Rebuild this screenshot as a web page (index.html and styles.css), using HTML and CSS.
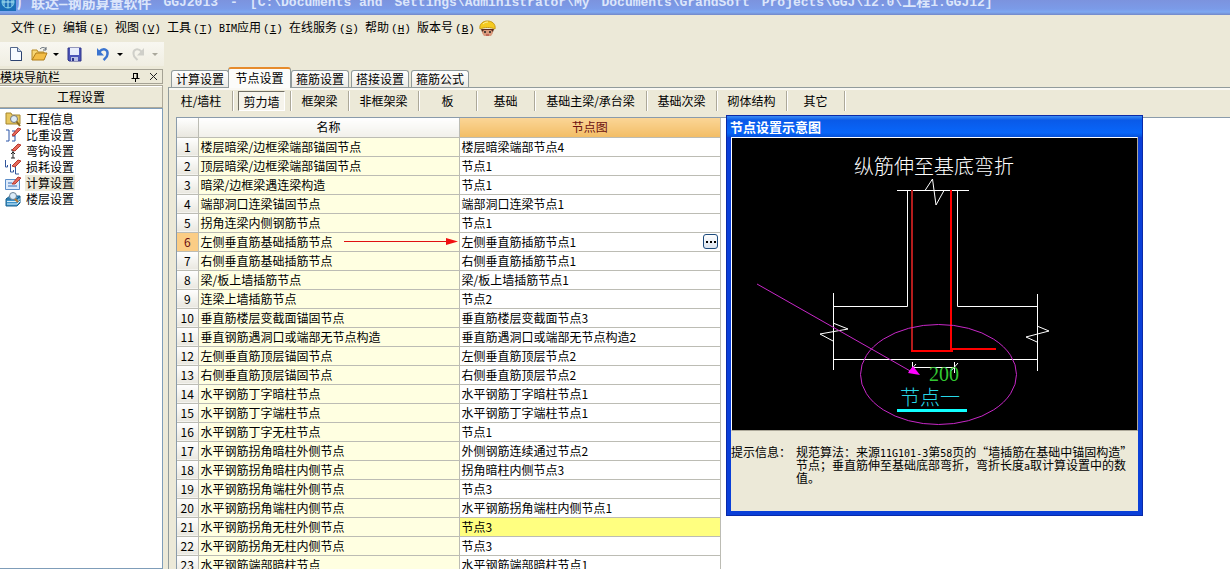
FILE: index.html
```html
<!DOCTYPE html>
<html lang="zh-CN">
<head>
<meta charset="utf-8">
<title>广联达—钢筋算量软件 GGJ2013</title>
<link rel="stylesheet" href="styles.css">
</head>
<body>
<header class="titlebar">
  <svg class="app-logo" width="16" height="16" viewBox="0 0 16 16"><rect width="16" height="16" fill="#1c6fb8"/><circle cx="8" cy="7" r="6" fill="none" stroke="#7fd4e8"/><path d="M2 7h12M8 1v12M4 3v8M12 3v8" stroke="#a9e4f2" fill="none"/></svg>
  <span class="title-cjk">广联达—钢筋算量软件</span>
  <span>GGJ2013</span>
  <span>-</span>
  <span>[C:\Documents and</span>
  <span>Settings\Administrator\My</span>
  <span>Documents\GrandSoft</span>
  <span>Projects\GGJ\12.0\<span class="title-cjk">工程</span>1.GGJ12]</span>
</header>

<nav class="menubar">
  <button>文件<span class="key">(<u>F</u>)</span></button>
  <button>编辑<span class="key">(<u>E</u>)</span></button>
  <button>视图<span class="key">(<u>V</u>)</span></button>
  <button>工具<span class="key">(<u>T</u>)</span></button>
  <button class="menu-bim"><span class="latin">BIM</span>应用<span class="key">(<u>I</u>)</span></button>
  <button class="menu-online">在线服务<span class="key">(<u>S</u>)</span></button>
  <button>帮助<span class="key">(<u>H</u>)</span></button>
  <button class="menu-version">版本号<span class="key">(<u>B</u>)</span></button>
  <svg width="17" height="17" viewBox="0 0 17 17"><path d="M3 9h11v4l-2 3H5l-2-3z" fill="#d99a7c"/><path d="M2 9h13l-1 3-2-2H5l-2 2z" fill="#5b2a1c"/><path d="M1 9C0 4 4 1 8.500 1S17 4 16 9c-4-2-11-2-15 0z" fill="#f5cb20" stroke="#c99a12"/><path d="M4 4c2-2 4-2 5-2" stroke="#fff3a0" fill="none"/><path d="M6 11v2M11 11v2" stroke="#222" stroke-width="1.500"/><path d="M7 15h3" stroke="#a33"/></svg>
</nav>

<div class="toolbar">
  <button class="tool" aria-label="新建"><svg width="14" height="16" viewBox="0 0 14 16"><path d="M1.500 1.500h7l4 4v9h-11z" fill="#f7fbff" stroke="#53678c"/><path d="M8.500 1.500v4h4" fill="#c7d8ef" stroke="#53678c"/><path d="M12.500 6v8.500H2" fill="none" stroke="#2c4270"/></svg></button>
  <button class="tool tool-open" aria-label="打开"><svg width="18" height="16" viewBox="0 0 18 16"><path d="M1 14V4h5l1 2h6v2" fill="#f7d775" stroke="#b78a25"/><path d="M1 14l4-7h11l-3 7z" fill="#f3bd45" stroke="#b07c18"/><path d="M9 3c2-2 4-2 6 0m0-2v3h-3" fill="none" stroke="#5a6470"/></svg></button>
  <i class="caret"></i>
  <button class="tool" aria-label="保存"><svg width="15" height="15" viewBox="0 0 15 15"><path d="M1 1h13v13H2L1 13z" fill="#4c55b8" stroke="#30368a"/><path d="M3 1h9v7H3z" fill="#e8edfb"/><path d="M4 10h7v4H4z" fill="#b9c0e4"/><path d="M5 11h2v3H5z" fill="#30368a"/></svg></button>
  <i class="tool-sep"></i>
  <button class="tool" aria-label="撤销"><svg width="14" height="14" viewBox="0 0 14 14"><path d="M3 5C8 0 12 3 11.500 7c0 3-2 4-4 6" fill="none" stroke="#3b74d0" stroke-width="2.500"/><path d="M1 1v7.500h7z" fill="#3b74d0"/></svg></button>
  <i class="caret"></i>
  <button class="tool" aria-label="重做" disabled><svg width="14" height="14" viewBox="0 0 14 14"><path d="M11 5C6 0 2 3 2.500 7c0 3 2 4 4 6" fill="none" stroke="#cfcfc9" stroke-width="2"/><path d="M13 1v7.500H6z" fill="#cfcfc9"/></svg></button>
  <i class="caret caret-off"></i>
</div>

<div class="workspace">
  <aside class="sidebar">
    <div class="side-head"><span class="side-title">模块导航栏</span>
      <button aria-label="固定"><svg width="9" height="10" viewBox="0 0 9 10"><path d="M2.500 1v5M2 1.500h5M.500 6.500h8M4.500 6v4" stroke="#000" fill="none"/><path d="M5.500 1h1.500v5H5.500z"/></svg></button>
      <button aria-label="关闭"><svg width="9" height="9" viewBox="0 0 9 9"><path d="M1 1l7 7M8 1L1 8" stroke="#222"/></svg></button>
    </div>
    <button class="side-section">工程设置</button>
    <ul class="side-list">
      <li><svg width="16" height="16" viewBox="0 0 16 16"><path d="M1 2h5l1 2h8v9H1z" fill="#e8c860" stroke="#a5862c"/><circle cx="9" cy="8" r="3.500" fill="#dcebf7" stroke="#777"/><path d="M11.500 10.500L15 15" stroke="#8a6a20" stroke-width="2"/></svg><a href="#">工程信息</a></li>
      <li><svg width="16" height="16" viewBox="0 0 16 16"><path d="M1 3h3v11H1M7 4h3v10H7M7 9h3" stroke="#2b55a8" fill="none"/><path d="M7 8l6-7 3 1-7 7z" fill="#e66a5c" stroke="#b8382e"/></svg><a href="#">比重设置</a></li>
      <li><svg width="16" height="16" viewBox="0 0 16 16"><path d="M6 15h4M8 15V7M6 11l2-2 2 2M8 7H6" stroke="#222" fill="none"/><path d="M7 7l6-6 3 1-6 6z" fill="#e66a5c" stroke="#b8382e"/></svg><a href="#">弯钩设置</a></li>
      <li><svg width="16" height="16" viewBox="0 0 16 16"><path d="M.500 1v7h2V6M5.500 5v8h3v-2M10.500 8v7H14" stroke="#33569c" fill="none"/><path d="M7 7l6-6 3 1-6 6z" fill="#e66a5c" stroke="#b8382e"/></svg><a href="#">损耗设置</a></li>
      <li class="current"><svg width="16" height="16" viewBox="0 0 16 16"><path d="M.500 4.500h14v10H.500z" fill="#dceafb" stroke="#5b8dc9"/><path d="M3 8h4M3 11h9" stroke="#3c6fb2"/><path d="M7 9l6-7 3 1-6 6z" fill="#e66a5c" stroke="#b8382e"/></svg><a href="#">计算设置</a></li>
      <li><svg width="16" height="16" viewBox="0 0 16 16"><path d="M1 8l4-3h10l-3 3zM1 8v7h11l3-3V5l-3 3" fill="#3f93c9" stroke="#19608f"/><path d="M2 10.500h10l3-3M2 13h10l3-3" stroke="#d9f0fb" fill="none"/><circle cx="8" cy="5" r="3.500" fill="#dcecf8" stroke="#6b8296"/><path d="M10 8l3 3" stroke="#b97b35" stroke-width="2"/></svg><a href="#">楼层设置</a></li>
    </ul>
  </aside>

  <main class="content">
    <div class="tabs">
      <button>计算设置</button><button class="active">节点设置</button><button>箍筋设置</button><button>搭接设置</button><button>箍筋公式</button>
    </div>
    <section class="panel">
      <div class="subtabs">
        <button>柱/墙柱</button><button class="pressed"><span>剪力墙</span></button><button>框架梁</button><button class="mid">非框架梁</button><button>板</button><button>基础</button><button class="wide">基础主梁/承台梁</button><button class="mid">基础次梁</button><button class="mid">砌体结构</button><button>其它</button>
      </div>
      <div class="grid-area">
        <table class="grid">
          <thead><tr><th class="num"></th><th class="name">名称</th><th class="node">节点图</th></tr></thead>
          <tbody>
            <tr><th>1</th><td>楼层暗梁/边框梁端部锚固节点</td><td>楼层暗梁端部节点4</td></tr>
            <tr><th>2</th><td>顶层暗梁/边框梁端部锚固节点</td><td>节点1</td></tr>
            <tr><th>3</th><td>暗梁/边框梁遇连梁构造</td><td>节点1</td></tr>
            <tr><th>4</th><td>端部洞口连梁锚固节点</td><td>端部洞口连梁节点1</td></tr>
            <tr><th>5</th><td>拐角连梁内侧钢筋节点</td><td>节点1</td></tr>
            <tr class="selected"><th>6</th><td><div class="cell">左侧垂直筋基础插筋节点<svg width="114" height="10" viewBox="0 0 114 10"><path d="M0 4.500h104" stroke="#e01010"/><path d="M102 1l12 3.500L102 8z" fill="#f01010"/></svg></div></td><td><div class="cell cell-edit">左侧垂直筋插筋节点1<button class="more" aria-label="更多"><i></i><i></i><i></i></button></div></td></tr>
            <tr><th>7</th><td>右侧垂直筋基础插筋节点</td><td>右侧垂直筋插筋节点1</td></tr>
            <tr><th>8</th><td>梁/板上墙插筋节点</td><td>梁/板上墙插筋节点1</td></tr>
            <tr><th>9</th><td>连梁上墙插筋节点</td><td>节点2</td></tr>
            <tr><th>10</th><td>垂直筋楼层变截面锚固节点</td><td>垂直筋楼层变截面节点3</td></tr>
            <tr><th>11</th><td>垂直钢筋遇洞口或端部无节点构造</td><td>垂直筋遇洞口或端部无节点构造2</td></tr>
            <tr><th>12</th><td>左侧垂直筋顶层锚固节点</td><td>左侧垂直筋顶层节点2</td></tr>
            <tr><th>13</th><td>右侧垂直筋顶层锚固节点</td><td>右侧垂直筋顶层节点2</td></tr>
            <tr><th>14</th><td>水平钢筋丁字暗柱节点</td><td>水平钢筋丁字暗柱节点1</td></tr>
            <tr><th>15</th><td>水平钢筋丁字端柱节点</td><td>水平钢筋丁字端柱节点1</td></tr>
            <tr><th>16</th><td>水平钢筋丁字无柱节点</td><td>节点1</td></tr>
            <tr><th>17</th><td>水平钢筋拐角暗柱外侧节点</td><td>外侧钢筋连续通过节点2</td></tr>
            <tr><th>18</th><td>水平钢筋拐角暗柱内侧节点</td><td>拐角暗柱内侧节点3</td></tr>
            <tr><th>19</th><td>水平钢筋拐角端柱外侧节点</td><td>节点3</td></tr>
            <tr><th>20</th><td>水平钢筋拐角端柱内侧节点</td><td>水平钢筋拐角端柱内侧节点1</td></tr>
            <tr class="changed"><th>21</th><td>水平钢筋拐角无柱外侧节点</td><td>节点3</td></tr>
            <tr><th>22</th><td>水平钢筋拐角无柱内侧节点</td><td>节点3</td></tr>
            <tr><th>23</th><td>水平钢筋端部暗柱节点</td><td>水平钢筋端部暗柱节点1</td></tr>
          </tbody>
        </table>
      </div>
    </section>
  </main>
</div>

<section class="dialog">
  <h2>节点设置示意图</h2>
  <div class="dialog-body">
    <svg class="drawing" viewBox="732 138 405 292">
      <g fill="none" stroke="#fff">
        <path d="M897 190.500H925L932.500 179L936 205L944 190.500H969M925 190.500H944"/>
        <path d="M907.500 190V306.500H833M957.500 190V306.500H1038M833 359.500H1038"/>
        <path d="M833.500 293V370M1037.500 294V371"/>
        <path d="M833 323L848 329L820 334L833 341M1037 326L1049 331L1026 337L1037 342"/>
        <path d="M912.500 362V371M954.500 362V373M912 367.500H955M909 372L916 364M951 371L958 363"/>
      </g>
      <path d="M912 190V351" stroke="#b41c1c" stroke-width="2" fill="none"/>
      <path d="M951 190V351M911 351H953M951 349H996" stroke="#f00" stroke-width="2" fill="none"/>
      <text class="draw-title" x="854" y="174">纵筋伸至基底弯折</text>
      <text class="draw-size" x="929" y="381">200</text>
      <text class="draw-node" x="900" y="405">节点一</text>
      <path d="M897 410.500H967" stroke="#1ff" stroke-width="3"/>
      <g fill="none" stroke="#c828c8"><ellipse cx="938.500" cy="374.500" rx="78" ry="50"/><path d="M757 284L912 372"/></g>
      <path d="M920 375L908 373L913 366z" fill="#f0f"/>
    </svg>
    <div class="note"><span>提示信息：</span><p>规范算法：来源<span class="latin">11G101-3</span>第<span class="latin">58</span>页的“墙插筋在基础中锚固构造”<br>节点；垂直筋伸至基础底部弯折，弯折长度<span class="latin">a</span>取计算设置中的数<br>值。</p></div>
  </div>
</section>
</body>
</html>
```
FILE: styles.css
```css
* { box-sizing: border-box; }
body {
  margin: 0;
  height: 100vh;
  overflow: hidden;
  display: flex;
  flex-direction: column;
  position: relative;
  background: #ece9d8;
  color: #000;
  font: 12px/16px "Noto Sans CJK SC", sans-serif;
}
button {
  margin: 0;
  padding: 0;
  border: 0;
  background: none;
  color: inherit;
  font: inherit;
  white-space: nowrap;
}
svg { flex: none; }
.latin { font-family: "DejaVu Sans Mono", monospace; font-size: 10px; line-height: 1; }

.titlebar {
  flex: none;
  height: 15px;
  display: flex;
  align-items: flex-end;
  gap: 12px;
  padding-bottom: 4px;
  overflow: hidden;
  background: linear-gradient(#7c93de, #7b9be8 60%, #7fa9f2 80%, #7388c8);
  color: #dce6fb;
  font: bold 13px/16px "Liberation Mono", "Noto Sans CJK SC", monospace;
  white-space: nowrap;
}
.app-logo { margin-right: -11px; }
.title-cjk { font-size: 14px; line-height: 1; }

.menubar {
  flex: none;
  height: 26px;
  display: flex;
  align-items: center;
  padding-left: 11px;
}
.menubar button { width: 52px; text-align: left; }
.menubar .menu-bim { width: 70px; }
.menubar .menu-online { width: 76px; }
.menubar .menu-version { width: 62px; }
.key { margin-left: 2px; font: 11px/16px "Liberation Mono", monospace; }

.toolbar {
  flex: none;
  align-self: flex-start;
  width: 164px;
  height: 24px;
  margin-top: 1px;
  display: flex;
  align-items: center;
  padding-left: 9px;
  background: linear-gradient(#f8f7f1, #f0eee2);
}
.tool { height: 16px; display: flex; align-items: center; margin-right: 7px; }
.tool-open { margin: 0 4px 0 1px; }
.caret {
  border: 3px solid transparent;
  border-top-color: #000;
  border-bottom: 0;
  margin-right: 8px;
}
.caret-off { border-top-color: #aaa89c; }
.tool-sep { width: 1px; height: 22px; background: #b5b2a3; margin-right: 7px; }

.workspace { flex: 1; min-height: 0; display: flex; padding-top: 3px; }
.sidebar { flex: none; width: 163px; display: flex; flex-direction: column; }
.side-head {
  height: 15px;
  display: flex;
  align-items: center;
  gap: 9px;
  padding-right: 4px;
  border: 1px solid #a5a294;
  border-left: 0;
}
.side-head button { display: flex; }
.side-title { flex: 1; }
.side-section {
  height: 23px;
  margin-top: 1px;
  border: 1px solid #aca899;
  border-left: 0;
  box-shadow: inset 0 1px #fff;
}
.side-list {
  flex: 1;
  margin: 0;
  padding: 2px 0 0 5px;
  list-style: none;
  background: #fff;
  border: 1px solid #7f9db9;
  border-left: 0;
}
.side-list li { height: 16px; display: flex; align-items: center; gap: 4px; }
.side-list a { padding: 0 1px; color: #000; text-decoration: none; }
.side-list .current a { background: #ece9d8; }

.content { flex: 1; min-width: 0; display: flex; flex-direction: column; margin-left: 5px; }
.tabs { flex: none; height: 18px; display: flex; align-items: flex-end; gap: 2px; padding-left: 3px; }
.tabs button {
  width: 58px;
  height: 17px;
  border: 1px solid #919b9c;
  border-bottom: 0;
  border-radius: 3px 3px 0 0;
  background: linear-gradient(#fff, #ecebe5);
}
.tabs .active {
  position: relative;
  width: 63px;
  height: 21px;
  margin: 0 -2px -1px -3px;
  padding-bottom: 2px;
  border-top: 2px solid #e68b2c;
  background: #fcfcfa;
}
.panel {
  flex: 1;
  min-height: 0;
  display: flex;
  flex-direction: column;
  border: 1px solid #919b9c;
  border-right: 0;
  border-bottom: 0;
}
.subtabs {
  flex: none;
  height: 29px;
  display: flex;
  align-items: center;
  padding: 0 0 4px 1px;
  box-shadow: inset 0 2px #faf9f4;
}
.subtabs button {
  width: 58px;
  height: 20px;
  border-right: 1px solid #aca899;
  box-shadow: 1px 0 #fff;
}
.subtabs button:first-child { width: 63px; }
.subtabs .mid { width: 70px; }
.subtabs .wide { width: 112px; }
.subtabs .pressed span {
  display: block;
  margin: 0 5px;
  height: 20px;
  line-height: 20px;
  background: #f6f4ec;
  border: 1px solid #fff;
  border-top-color: #716f64;
  border-left-color: #716f64;
}
.grid-area {
  flex: 1;
  min-height: 0;
  overflow: hidden;
  margin-left: 7px;
  background: #fff;
  border: 1px solid #8a9bab;
  border-right: 0;
  border-bottom: 0;
}
.grid { width: 544px; table-layout: fixed; border-collapse: collapse; }
.grid tr { height: 19px; }
.grid th, .grid td {
  height: 19px;
  padding: 0 2px;
  border: 1px solid #bcbcb4;
  line-height: 16px;
  text-align: left;
  white-space: nowrap;
}
.grid th { padding: 0; font-weight: normal; text-align: center; background: linear-gradient(#fff, #e9e7df); }
.grid thead th { border-top: 0; }
.grid tr > :first-child { border-left: 0; }
.grid .num { width: 21px; }
.grid .name { width: 261px; background: linear-gradient(#fff, #f1f0ea); }
.grid .node { background: linear-gradient(#fbd596, #f2bd66); color: #6b1010; }
.grid td:nth-child(2) { background: #ffffe1; }
.grid .selected th { background: #fbcd85; color: #6b1010; }
.grid .changed td:last-child { background: #ffff80; }
.cell { display: flex; align-items: center; gap: 11px; height: 16px; }
.cell-edit { justify-content: space-between; }
.more {
  width: 15px;
  height: 15px;
  display: flex;
  align-items: center;
  justify-content: center;
  gap: 2px;
  border: 1px solid #1c4a7c;
  border-radius: 3px;
  background: linear-gradient(#fff, #dce4ee);
}
.more i { width: 2px; height: 2px; background: #000; }

.dialog {
  position: absolute;
  left: 726px;
  top: 115px;
  width: 417px;
  padding: 0 4px 4px;
  background: #0a3fd8;
  border: 1px solid #0a2aa8;
}
.dialog h2 {
  margin: 0 -4px;
  padding: 3px 4px 2px 3px;
  height: 21px;
  background: linear-gradient(#3c8cf4, #0a5ae8 20%, #0866fa 80%, #0450d8);
  color: #fff;
  font: bold 13px/16px "Noto Sans CJK SC", sans-serif;
}
.dialog-body { background: #ece9d8; }
.drawing {
  display: block;
  width: 100%;
  background: #000;
  border: 1px solid #fff;
  border-right-color: #aca899;
  border-bottom-color: #aca899;
}
.note { display: flex; height: 80px; padding-top: 15px; line-height: 12px; white-space: nowrap; }
.note > span { width: 65px; }
.note p { margin: 0; }
.draw-title { font: 300 20px "Noto Sans CJK SC", sans-serif; fill: #fff; }
.draw-size { font: 20px "Liberation Serif", serif; fill: #32c832; }
.draw-node { font: 300 20px "Noto Sans CJK SC", sans-serif; fill: #28d8e8; }
```
